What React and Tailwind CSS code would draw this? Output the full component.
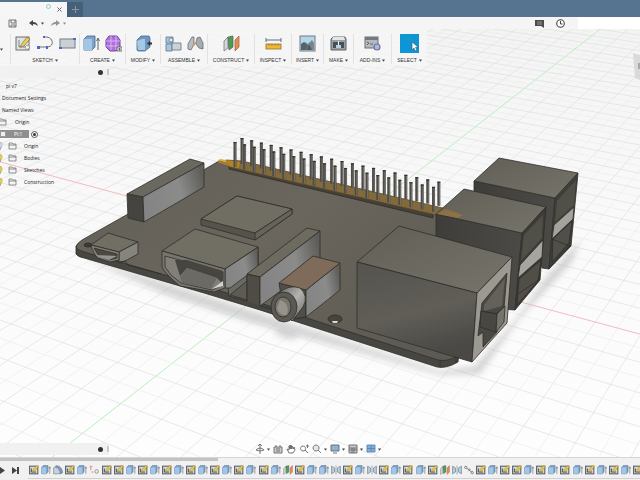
import React, { useState } from 'react';

const TIMELINE = 'SEFSEOSSESESESESESESECSEEJSEJSESESCJLSESSESESESESES'.split('');

// Ground grid, projected from the two vanishing points on the horizon
const gridLines = () => {
  const lines = [];
  for (let i = -60; i <= 60; i++) {
    const b = i * 0.0085;
    const at = (y) => {
      const s = (248 - y) / (y + 300);
      return (320 - 1717 * b + 1022 * (s - b)) / (1 + s);
    };
    lines.push({ key: `a${i}`, x1: at(20), y1: 20, x2: at(480), y2: 480, axis: i === 0 ? 'green' : null, major: i % 2 === 0 });
  }
  for (let i = -30; i <= 60; i++) {
    const c = i * 0.0158;
    const at = (x) => {
      const b = (320 - x + c * (1022 - x)) / (x + 1717);
      return (248 - 300 * (b + c)) / (1 + b + c);
    };
    lines.push({ key: `b${i}`, x1: -10, y1: at(-10), x2: 650, y2: at(650), axis: i === 0 ? 'red' : null, major: i % 2 === 0 });
  }
  return lines;
};

const lineColor = (line) => {
  if (line.axis === 'green') return '#b8efbc';
  if (line.axis === 'red') return '#f3bcc0';
  return line.major ? '#dedfe1' : '#ebeced';
};

const Pin = ({ x, y, h }) => (
  <g>
    <rect x={x - 1.5} y={y} width="3" height={h} fill="#4c4b47" />
    <rect x={x + 0.2} y={y + 1} width="0.9" height={h - 1} fill="#75736c" />
    <rect x={x - 1.5} y={y} width="3" height="1.2" fill="#333" />
  </g>
);

const Scene = () => {
  const pins = Array.from({ length: 20 }, (_, i) => i);
  return (
    <svg className="absolute inset-0 h-full w-full" viewBox="0 0 640 480" preserveAspectRatio="xMidYMid slice" role="img" aria-label="Board model">
      <defs>
        <linearGradient id="sky" x1="0" y1="0" x2="0" y2="1">
          <stop offset="0" stopColor="#f3f3f3" />
          <stop offset="0.5" stopColor="#fafafa" />
          <stop offset="1" stopColor="#fefefe" />
        </linearGradient>
        <linearGradient id="top" x1="0" y1="0" x2="1" y2="1">
          <stop offset="0" stopColor="#605e56" />
          <stop offset="1" stopColor="#77746a" />
        </linearGradient>
        <linearGradient id="board" x1="0" y1="0" x2="1" y2="0.6">
          <stop offset="0" stopColor="#625f57" />
          <stop offset="0.5" stopColor="#6a665d" />
          <stop offset="1" stopColor="#5d5a53" />
        </linearGradient>
        <linearGradient id="side" x1="0" y1="0.6" x2="1" y2="0.3">
          <stop offset="0" stopColor="#848485" />
          <stop offset="0.6" stopColor="#8b8b8a" />
          <stop offset="1" stopColor="#5f5e5b" />
        </linearGradient>
        <linearGradient id="front" x1="0" y1="0" x2="0.3" y2="1">
          <stop offset="0" stopColor="#55534e" />
          <stop offset="0.6" stopColor="#605e57" />
          <stop offset="1" stopColor="#4b4945" />
        </linearGradient>
        <linearGradient id="usb" x1="0" y1="0" x2="1" y2="0">
          <stop offset="0" stopColor="#3e3d3a" />
          <stop offset="1" stopColor="#4c4a46" />
        </linearGradient>
        <linearGradient id="barrel" x1="0" y1="0" x2="1" y2="1">
          <stop offset="0" stopColor="#5f5e5b" />
          <stop offset="0.5" stopColor="#b2b2b0" />
          <stop offset="1" stopColor="#656460" />
        </linearGradient>
        <filter id="soft" x="-20%" y="-20%" width="140%" height="140%">
          <feGaussianBlur stdDeviation="3" />
        </filter>
      </defs>

      <rect width="640" height="480" fill="url(#sky)" />
      {gridLines().map((line) => (
        <line key={line.key} x1={line.x1} y1={line.y1} x2={line.x2} y2={line.y2} stroke={lineColor(line)} strokeWidth={line.axis ? 1 : 0.7} />
      ))}

      {/* ground shadow */}
      <g filter="url(#soft)" fill="#b9b9b9" opacity="0.6">
        <path d="M82 257 L260 313 L440 371 L475 366 L515 320 L548 275 L580 240 L572 262 L520 318 L480 374 L440 375 L250 322 L165 294Z" />
        <path d="M280 326 L308 330 L292 340 L274 334Z" />
      </g>

      <g stroke="#2f2e2a" strokeWidth="0.8" strokeLinejoin="round">
        {/* far USB stack */}
        <path d="M474 181 L555 198 L549 269 L542 268 L530 205 L474 193Z" fill="url(#usb)" />
        <path d="M474 181 L499 158 L578 173 L555 198Z" fill="url(#top)" />
        <path d="M555 198 L578 173 L571 246 L549 269Z" fill="#3f3e39" />
        <path d="M557 201 L576 180 L574 205 L555 222Z" fill="#504f48" stroke="none" />
        <path d="M554 225 L574 207 L573 219 L552 239Z" fill="#a5a39d" />
        <path d="M553 239 L572 221 L569 243 L552 262Z" fill="#514f49" />
        <path d="M552 239 L570 246 L549 268" fill="none" />

        {/* board */}
        <path d="M76 246 L76 254 Q78 257 84 258 L204 293 L260 310 L350 339 L437 367 Q446 369 458 362 L460 345 L120 245Z" fill="#484640" />
        <path d="M76 247 Q76 244 82 240 L128 214 L219 161 L240 166 L440 214 L500 250 L480 350 L458 356 Q447 362 438 360 L350 332 L307 318 L260 303 L204 286 L84 252 Q77 250 76 247Z" fill="url(#board)" />
        <path d="M440 360 V367 M456 357 V363" fill="none" />
        <ellipse cx="88" cy="245" rx="4" ry="2" fill="#3b3a36" />

        {/* display connector */}
        <path d="M127 194 L190 159 L204 163 L143 197Z" fill="#6b695f" />
        <path d="M127 194 L143 197 L144 222 L128 218Z" fill="#454440" />
        <path d="M143 197 L204 163 V187 L144 222Z" fill="url(#side)" />

        {/* processor */}
        <path d="M201 219 L237 196 L292 209 V214 L255 240 L201 225Z" fill="#55534c" />
        <path d="M201 219 L237 196 L292 209 L255 233Z" fill="#706d62" />
        <path d="M255 233 L292 209 V214 L255 240Z" fill="#66635a" />

        {/* pin header */}
        <path d="M229 165 L433 213 V218 L229 169Z" fill="#45413a" />
        <path d="M226 160 L242 161 L447 209 L436 215 L229 167Z" fill="#826a3c" stroke="#584725" />
      </g>
      <path d="M217 162 L220 159 L240 162 L239 168 L229 166Z" fill="#c68f1d" opacity="0.7" />
      {pins.map((i) => (
        <g key={i}>
          <Pin x={242 + i * 9.6 + i * i * 0.04} y={138 + i * 2.3} h={26 - i * 0.1} />
          <Pin x={235 + i * 9.5 + i * i * 0.05} y={142 + i * 2.36} h={25} />
        </g>
      ))}

      <g stroke="#2f2e2a" strokeWidth="0.8" strokeLinejoin="round">
        {/* near USB stack */}
        <path d="M436 214 L522 233 L515 310 L500 309 L500 255 L436 242Z" fill="url(#usb)" />
        <path d="M436 214 L464 189 L546 207 L522 233Z" fill="url(#top)" />
        <path d="M522 233 L546 207 L540 280 L515 310Z" fill="#3c3b36" />
        <path d="M524 235 L543 215 L542 238 L521 261Z" fill="#504f48" stroke="none" />
        <path d="M520 265 L543 240 L542 257 L518 278Z" fill="#a7a59f" />
        <path d="M519 279 L541 260 L538 281 L517 305Z" fill="#504e47" />
        <path d="M518 294 L540 279" fill="none" />
        <path d="M436 214 L446 209 L463 215 L458 218Z" fill="#9b783b" stroke="none" opacity="0.7" />

        {/* ethernet */}
        <path d="M357 262 L399 226 L512 257 L477 293Z" fill="url(#top)" />
        <path d="M357 262 L477 293 L472 362 L357 328Z" fill="url(#front)" />
        <path d="M477 293 L512 257 L507 323 L472 362Z" fill="#9b9992" />
        <path d="M482 303 L507 273 L504 308 L497 313 V332 L483 347 V332 L478 336Z" fill="#4a4843" />
        <path d="M484 305 L505 278 L502 306 L484 311Z" fill="#64615a" stroke="none" />
        <path d="M481 311 L497 314 L504 307" fill="none" />
        <path d="M481 311 L497 314 L496 332 L480 327Z" fill="#494741" />
        <path d="M497 314 L505 306 L504 322 L496 332Z" fill="#77746b" />

        {/* micro USB */}
        <path d="M91 245 L108 233 L138 242 L119 252Z" fill="#716e63" />
        <path d="M119 252 L138 242 V254 L125 261 L119 262Z" fill="#85847f" />
        <path d="M91 245 L119 252 V260 L110 262 L98 258 Q93 254 91 245Z" fill="#827f77" />
        <path d="M94 248 L117 254 V258 L109 260 L99 256Z" fill="#4b4944" />
        <path d="M96 255 L117 256 L109 260 L99 257Z" fill="#969490" stroke="none" />
        <path d="M119 263 L125 261 L128 265 L161 274" fill="none" />

        {/* HDMI */}
        <path d="M225 269 L258 247 V268 L247 276 V301 L229 296 L228 287Z" fill="#6a6964" />
        <path d="M225 269 L258 247 V267 L230 288 L225 288Z" fill="url(#side)" />
        <path d="M230 295 L247 281 V300Z" fill="#5d5b53" />
        <path d="M162 251 L195 229 L258 247 L225 269Z" fill="#716e64" />
        <path d="M162 251 L225 269 V288 L214 292 L180 286 Q165 274 162 267Z" fill="#78756d" />
        <path d="M165 256 L223 272 V285 L212 290 L181 283 Q170 276 165 267Z" fill="#827f78" />
        <path d="M175 260 L187 260 L223 271 V284 L217 278 L187 268 L180 276Z" fill="#464540" stroke="none" />
        <path d="M180 277 L187 268 L217 278 L211 289 L182 283Z" fill="#6c6a64" stroke="none" />
        <path d="M212 289 L223 281 V286Z" fill="#d3d2cf" stroke="none" />

        {/* camera connector */}
        <path d="M247 274 L307 228 L320 231 L260 277Z" fill="#6d6a60" />
        <path d="M247 274 L260 277 V306 L247 301Z" fill="#4e4c45" stroke="none" />
        <path d="M247 301 V274 L260 277 V306" fill="none" />
        <path d="M260 277 L320 231 V262 L260 306Z" fill="url(#side)" />
        <path d="M260 306 L272 309" fill="none" />

        {/* audio jack */}
        <path d="M279 283 L306 290 V317 L285 320Z" fill="#504e47" />
        <path d="M306 290 L340 263 V290 L306 317Z" fill="url(#side)" />
        <path d="M279 283 L313 256 L340 263 L306 290Z" fill="#7f6b59" />
        <path d="M279 293 Q289 284 300 288 Q309 296 303 307 L292 321 L276 300Z" fill="url(#barrel)" />
        <ellipse cx="284" cy="307" rx="13" ry="15" fill="#5b5951" />
        <ellipse cx="283" cy="307" rx="8" ry="10" fill="#77756e" />
        <path d="M280 300 Q290 303 287 315 Q279 316 277 308Z" fill="#96938b" stroke="none" />
        <ellipse cx="335" cy="319" rx="7" ry="4" fill="#49433c" />
        <path d="M332 321 H338 L337 323 H333Z" fill="#d8d8d5" stroke="none" />
      </g>

      {/* view cube */}
      <path d="M633 53 L640 55 V80 L635 78Z" fill="#d9dadb" />
      <path d="M638 63 H640 V69 H638Z" fill="#a6a8aa" />
    </svg>
  );
};

const SketchIcon = () => (
  <g>
    <rect x="1" y="2" width="13" height="13" fill="#dfe2e4" stroke="#6a6f73" />
    <path d="M4 5 V12 H11" fill="none" stroke="#80868a" />
    <path d="M6 10 L12 2 L15 4 L9 11 L5 12Z" fill="#f0cd58" stroke="#7e6b36" strokeWidth="0.7" />
    <path d="M12 10 L15 12 L12 15 L10 12Z" fill="#f2f3f3" stroke="#777" strokeWidth="0.6" />
  </g>
);

const ExtrudeIcon = () => (
  <g>
    <path d="M1 4 L4 1 H12 V12 L9 15 H1Z" fill="#7ba3cb" stroke="#55708a" strokeWidth="0.9" />
    <path d="M1 4 H9 V15 H1Z" fill="#a3c6e6" />
    <path d="M15 15 V4 M13.5 6 L15 3 L16.5 6" fill="none" stroke="#555" strokeWidth="0.9" />
  </g>
);

const PlanesIcon = () => (
  <g>
    <path d="M1 6 L5 2 V13 L1 16Z" fill="#d3d6d8" stroke="#686d70" strokeWidth="0.7" />
    <path d="M5 2 L10 1 V12 L6 15Z" fill="#519957" stroke="#49684b" strokeWidth="0.7" />
    <path d="M12 5 L16 1 V12 L12 16Z" fill="#e88b55" stroke="#96613f" strokeWidth="0.7" />
  </g>
);

const JointIcon = () => (
  <g stroke="#656b70" strokeWidth="0.8">
    <path d="M1 14 V9 L5 2 H7 V9 L4 15Z" fill="#b8bfc4" />
    <path d="M10 3 L13 2 L16 8 V14 L12 13 L9 9Z" fill="#a6adb2" />
    <path d="M6 11 L10 6" stroke="#d29a58" strokeWidth="1.5" />
  </g>
);

const ICONS = {
  sketch: <SketchIcon />,
  line: (
    <g>
      <path d="M2 12 H9 M7 2 C17 1 18 12 10 12" fill="none" stroke="#6c7074" strokeWidth="1" />
      <path d="M0 11 H3 V14 H0Z M6 1 H8 V3 H6Z M9 11 H11 V14 H9Z" fill="#5564c8" />
    </g>
  ),
  rect: (
    <g>
      <rect x="1" y="4" width="15" height="9" fill="#cbd0d4" stroke="#777d82" />
      <path d="M0 12 H3 V14 H0Z M14 3 H17 V5 H14Z" fill="#5564c8" />
    </g>
  ),
  extrude: <ExtrudeIcon />,
  form: (
    <g>
      <path d="M4 1 H12 L15 5 V12 L11 16 H5 L1 12 V5Z" fill="#ad70dc" stroke="#7445a2" />
      <path d="M1 6 H15 M1 11 H14 M6 1 V15 M11 1 V15" stroke="#e2c6f5" strokeWidth="0.8" />
      <rect x="12" y="12" width="5" height="4" fill="#eee" stroke="#444" strokeWidth="0.7" />
      <path d="M13 14 H16 M14.5 13 V15.5" stroke="#333" strokeWidth="0.6" />
    </g>
  ),
  press: (
    <g>
      <path d="M2 5 L6 1 H14 L15 3 V12 L10 16 H3 L2 15Z" fill="#6e96bf" stroke="#4d6c88" strokeWidth="0.8" />
      <path d="M2 6 L7 4 H10 V15 H3Z" fill="#a4c8e8" />
      <path d="M12 8.5 L15 6 V7.500 H17 V9.500 H15 V11Z" fill="#333" />
    </g>
  ),
  component: (
    <g stroke="#5f7384" strokeWidth="0.8">
      <path d="M1 2 H8 V8 H1Z" fill="#a5c9e6" />
      <path d="M1 9 H7 V16 H1Z" fill="#a9c6e0" />
      <path d="M7 8 H16 V15 H7Z" fill="#cbd3da" />
      <circle cx="6" cy="5" r="2" fill="#e6f0f7" />
    </g>
  ),
  joint: <JointIcon />,
  planes: <PlanesIcon />,
  measure: (
    <g>
      <path d="M1 5 H16 M1 3 V7 M16 3 V7" stroke="#60717c" strokeWidth="1" />
      <rect x="1" y="9" width="15" height="5" fill="#efb83b" stroke="#917028" strokeWidth="0.8" />
      <path d="M4 9 V11 M7 9 V11 M10 9 V11 M13 9 V11" stroke="#8c6a25" strokeWidth="0.6" />
    </g>
  ),
  image: (
    <g>
      <rect x="1" y="1" width="15" height="15" fill="#b5d6e8" stroke="#757b80" />
      <path d="M2 10 L6 7 L9 9 L13 5 L15 8 V15 H2Z" fill="#76868f" />
      <path d="M8 15 L10 9 L13 15Z" fill="#4e5961" />
      <path d="M2 9 L5 7 L9 11 L7 15 H2Z" fill="#56636d" />
    </g>
  ),
  print: (
    <g>
      <path d="M1 4 L3 2 H15 L16 4 V15 H1Z" fill="#999fa3" stroke="#5f6468" />
      <path d="M3 2 H14 L15 5 H2Z" fill="#e3e5e6" />
      <rect x="3" y="7" width="11" height="6" fill="#474e54" />
      <path d="M6 10 H11 V13 H6Z" fill="#b3d1e3" />
      <path d="M8.5 6 V10" stroke="#fff" strokeWidth="1" />
    </g>
  ),
  addin: (
    <g>
      <rect x="1" y="2" width="13" height="11" fill="#b4b9bd" stroke="#6c7175" />
      <path d="M1 2 H14 V5 H1Z" fill="#747a80" />
      <path d="M3 7 L5 8 L3 10 M6 9 H9" stroke="#444" fill="none" strokeWidth="0.7" />
      <circle cx="13" cy="12" r="3" fill="#afb6dc" stroke="#6d75a4" strokeWidth="1.2" />
    </g>
  ),
  select: (
    <g>
      <path d="M3 4 H10 L12 7" fill="none" stroke="#39a877" strokeWidth="0.8" strokeDasharray="2 1" />
      <path d="M11 7 V15 L13 13 L14 16 L16 15 L14.500 12.500 L17 12Z" fill="#fff" stroke="#3c5260" strokeWidth="0.6" />
    </g>
  ),
};

const GROUPS = [
  { label: 'SKETCH', icons: ['sketch', 'line', 'rect'], width: 'w-[69px]' },
  { label: 'CREATE', icons: ['extrude', 'form'], width: 'w-[46px]' },
  { label: 'MODIFY', icons: ['press'], width: 'w-[35px]' },
  { label: 'ASSEMBLE', icons: ['component', 'joint'], width: 'w-[47px]' },
  { label: 'CONSTRUCT', icons: ['planes'], width: 'w-[47px]' },
  { label: 'INSPECT', icons: ['measure'], width: 'w-[37px]' },
  { label: 'INSERT', icons: ['image'], width: 'w-[32px]' },
  { label: 'MAKE', icons: ['print'], width: 'w-[30px]' },
  { label: 'ADD-INS', icons: ['addin'], width: 'w-[38px]' },
  { label: 'SELECT', icons: ['select'], width: 'w-[36px]' },
];

const Caret = () => (
  <svg className="h-[3px] w-[3px] shrink-0" viewBox="0 0 4 3" aria-hidden="true">
    <path d="M0 0 H4 L2 3Z" fill="#444" />
  </svg>
);

const ToolGroup = ({ group }) => (
  <div className={`flex h-[30px] flex-col items-center justify-between border-l border-[#e2e2e2] ${group.width}`}>
    <div className="flex gap-1">
      {group.icons.map((name) => (
        <button
          key={name}
          type="button"
          aria-label={name}
          className={`flex h-[19px] items-center justify-center ${name === 'select' ? 'w-[19px] bg-[#0e95d6]' : 'w-[18px]'}`}
        >
          <svg className="h-[17px] w-[17px]" viewBox="0 0 17 17">{ICONS[name]}</svg>
        </button>
      ))}
    </div>
    <button type="button" className="flex items-center gap-[2px] text-[5px] leading-[8px] text-[#333]">
      {group.label}
      <Caret />
    </button>
  </div>
);

const Folder = () => (
  <svg className="h-2 w-[9px] shrink-0" viewBox="0 0 9 8" aria-hidden="true">
    <path d="M1 7 V1 H4 L5 2 H8 V7Z M1 3 H8" fill="#f4f4f4" stroke="#777" strokeWidth="0.8" />
  </svg>
);

const Bulb = ({ on }) => (
  <svg className="h-2 w-[3px] shrink-0" viewBox="0 0 3 8" aria-hidden="true">
    <path d="M0 0 Q3 1 2 4 L1 6 H0Z" fill={on ? '#ece254' : '#eef0f5'} stroke={on ? '#a8a150' : '#8c92a0'} strokeWidth="0.6" />
    <path d="M0 7 H1" stroke="#777" />
  </svg>
);

const PanelBar = () => (
  <div className="flex h-3 w-[109px] items-center justify-end gap-1 bg-[#f1f1f1]">
    <button type="button" aria-label="Panel options" className="flex h-[5px] w-[5px] items-center justify-center rounded-full bg-[#333]" />
    <span className="h-[6px] w-[2px] bg-[#c9c9c9]" />
  </div>
);

const Browser = () => {
  const [active, setActive] = useState(true);
  return (
    <ul className="mt-[2px] w-fit font-['Open_Sans','Noto_Sans',sans-serif] text-[5px] leading-[12px] text-[#222]">
      <li className="h-3 pl-[6px]">pi v7</li>
      <li className="h-3 pl-[2px]">Document Settings</li>
      <li className="h-3 pl-[2px]">Named Views</li>
      <li className="flex h-3 items-center gap-[8px] overflow-hidden">
        <span className="-ml-[2px] flex"><Folder /></span>Origin
      </li>
      <li className="flex h-3 items-center gap-[2px]">
        <span className="flex h-2 w-[29px] items-center gap-2 bg-[#8f8f8f] text-white">
          <span className="h-[6px] w-[6px] rounded-[1px] border border-[#999] bg-[#eee]" />
          Pi:1
        </span>
        <label className="flex items-center">
          <input type="radio" checked={active} onChange={() => setActive(true)} aria-label="Activate component" className="flex h-[7px] w-[7px] appearance-none items-center justify-center rounded-full border border-[#555] bg-white before:h-[3px] before:w-[3px] before:rounded-full before:bg-[#333]" />
        </label>
      </li>
      {['Origin', 'Bodies', 'Sketches', 'Construction'].map((name) => (
        <li key={name} className="flex h-3 items-center">
          <Bulb on={name !== 'Origin'} />
          <span className="ml-[5px] mr-[7px] flex"><Folder /></span>
          {name}
        </li>
      ))}
    </ul>
  );
};

const NAV = [
  { name: 'Orbit', caret: true, art: <path d="M5 0 V10 M1 6 Q5 2 9 6 M1 6 Q5 8 9 6 M3 2 L5 0 L7 2" /> },
  { name: 'Look at', art: <path d="M1 3 H9 V9 H1Z M3 1 V3 M7 1 V3 M3 5 H7 M3 7 H7" fill="#cfcfcf" /> },
  { name: 'Pan', art: <path d="M3 9 L1 5 L3 6 V2 L4 5 V1 L5 5 V1 L6 5 V2 L8 5 V3 L9 6 L7 9Z" /> },
  { name: 'Zoom', art: <path d="M4 2 A2.500 2.500 0 1 0 4.100 2 M6 6 L9 9 M7 2 H10 M8.500 0.500 V4" /> },
  { name: 'Fit', caret: true, art: <path d="M4 1 A3 3 0 1 0 4.100 1 M6 6 L9 9" fill="#dcebf0" /> },
  { name: 'Display', caret: true, art: <path d="M1 1 H9 V7 H1Z M3 9 H7" fill="#8db4d6" /> },
  { name: 'Grid', caret: true, art: <path d="M1 1 H9 V9 H1Z M1 4 H9 M1 6 H9 M4 4 V9 M6 4 V9" fill="#c7cbce" /> },
  { name: 'Viewports', caret: true, art: <path d="M1 1 H9 V8 H1Z M5 1 V8 M1 4.500 H9" fill="#7fb0df" stroke="#5f86ab" /> },
];

const Feature = ({ type }) => {
  if (type === 'S') return <g><rect x="1" y="2" width="14" height="13" fill="#d3d9dc" stroke="#555c61" strokeWidth="1.8" /><path d="M4 6 V12 H12" stroke="#444" strokeWidth="1.6" fill="none" /><path d="M6 9 L13 1 L16 3 L9 11Z" fill="#f1cc36" stroke="#84702c" strokeWidth="0.7" /></g>;
  if (type === 'E') return <ExtrudeIcon />;
  if (type === 'C') return <PlanesIcon />;
  if (type === 'J') return <g stroke="#587187" fill="#b6d0e1"><path d="M1 2 L6 5 V12 L1 15Z M16 2 L11 5 V12 L16 15Z" /><path d="M8.500 1 V16" stroke="#777" /></g>;
  if (type === 'F') return <g stroke="#64788b"><path d="M1 5 L5 1 Q15 2 16 13 L12 15 H1Z" fill="#c9d0d8" /><path d="M4 4 Q12 5 12 15 L16 13 Q15 3 7 2Z" fill="#789fca" /></g>;
  if (type === 'O') return <g><path d="M3 1 V9 M1 3 H6" stroke="#e09a9a" strokeWidth="2" /><circle cx="6" cy="12" r="2" fill="#f0b7b7" /><circle cx="13" cy="11" r="3" fill="#eee" stroke="#777" strokeWidth="1.2" /></g>;
  return <g fill="#eee" stroke="#444"><path d="M3 4 L14 13" /><circle cx="3" cy="4" r="2" /><circle cx="9" cy="8" r="1.500" /><circle cx="14" cy="13" r="2" /></g>;
};

const App = () => {
  return (
    <div className="relative flex h-screen flex-col overflow-hidden bg-[#f7f7f7] font-['Liberation_Sans',Arial,sans-serif]">
      <Scene />

      <header className="relative">
        <div className="flex h-[17px] items-end bg-[#56738f]">
          <div className="flex h-[15px] w-[67px] items-center justify-end gap-1 bg-[#f6f6f6] pr-1">
            <span className="mb-[6px] h-[5px] w-[5px] rounded-full border border-[#91cbd6]" />
            <button type="button" aria-label="Close document" className="flex h-2 w-2 items-center justify-center">
              <svg className="h-[5px] w-[5px]" viewBox="0 0 5 5"><path d="M0.500 0.500 L4.500 4.500 M4.500 0.500 L0.500 4.500" stroke="#666" /></svg>
            </button>
          </div>
          <button type="button" aria-label="New document" className="flex h-[15px] w-4 items-center justify-center bg-[#466078]">
            <svg className="h-[7px] w-[7px]" viewBox="0 0 7 7"><path d="M3.500 0 V7 M0 3.500 H7" stroke="#8298ab" /></svg>
          </button>
        </div>
        <div className="flex h-3 items-center bg-[#f5f5f5]">
          <button type="button" aria-label="Save" className="ml-2">
            <svg className="h-[9px] w-[9px]" viewBox="0 0 9 9"><path d="M1 1 H8 V8 H1Z M3 1 V4 H7 V1 M3 8 V6 H7 V8" fill="none" stroke="#777" /></svg>
          </button>
          <button type="button" aria-label="Undo" className="ml-3 flex items-center gap-[3px]">
            <svg className="h-[7px] w-[9px]" viewBox="0 0 9 7"><path d="M0 3 L4 0 V2 Q8 2 9 6 Q7 4 4 4 V6Z" fill="#444" /></svg>
            <Caret />
          </button>
          <button type="button" aria-label="Redo" className="ml-[7px] flex items-center gap-[3px] opacity-60">
            <svg className="h-[7px] w-[9px]" viewBox="0 0 9 7"><path d="M9 3 L5 0 V2 Q1 2 0 6 Q2 4 5 4 V6Z" fill="#555" /></svg>
            <Caret />
          </button>
          <div className="ml-auto flex gap-3">
            <button type="button" aria-label="Comments">
              <svg className="h-[9px] w-[9px]" viewBox="0 0 9 9"><path d="M0 1 H9 V9 L6 7 H0Z" fill="#4b4b4b" /><path d="M2 3 H7 M2 5 H7" stroke="#aaa" strokeWidth="0.8" /></svg>
            </button>
            <button type="button" aria-label="Job status">
              <svg className="h-[9px] w-[9px]" viewBox="0 0 9 9"><circle cx="4.500" cy="4.500" r="3.800" fill="#fff" stroke="#444" strokeWidth="1.100" /><path d="M4.500 2 V5 H6.500" fill="none" stroke="#444" /></svg>
            </button>
          </div>
          <div className="ml-[13px] h-full w-[62px] bg-white" />
        </div>
      </header>

      <nav aria-label="Tools" className="relative flex h-[37px] w-fit items-end bg-[#f6f6f6]/85 pb-[2px]">
        <div className="flex h-[30px] w-[10px] items-center"><Caret /></div>
        {GROUPS.map((group) => <ToolGroup key={group.label} group={group} />)}
      </nav>

      <aside className="relative flex-1">
        <PanelBar />
        <Browser />
      </aside>

      <div className="relative mb-[2px] grid grid-cols-[109px_1fr_114px] items-center">
        <PanelBar />
        <div className="flex items-center justify-center gap-[3px]">
          {NAV.map((item) => (
            <button key={item.name} type="button" aria-label={item.name} className="flex items-center gap-[2px]">
              <svg className="h-[10px] w-[10px]" viewBox="0 0 10 10" fill="none" stroke="#666" strokeWidth="0.9">{item.art}</svg>
              {item.caret && <Caret />}
            </button>
          ))}
        </div>
      </div>

      <footer className="relative h-[23px] shrink-0 border-t border-[#d5d5d5] bg-[#f1f1f1]">
        <div className="h-[3px] w-[34%] bg-[#c3c3c3]" />
        <div className="flex h-[18px] items-center">
          <button type="button" aria-label="Play" className="w-[5px]">
            <svg className="h-[7px] w-[5px]" viewBox="0 0 5 7"><path d="M0 0 L5 3.500 L0 7Z" fill="#444" /></svg>
          </button>
          <button type="button" aria-label="Go to end" className="ml-[7px] mr-[9px] w-[7px]">
            <svg className="h-[7px] w-[7px]" viewBox="0 0 7 7"><path d="M0 0 L5 3.500 L0 7Z M5 0 H7 V7 H5Z" fill="#444" /></svg>
          </button>
          <div className="-mr-1 grid flex-1 auto-cols-fr grid-flow-col border-b border-[#d0d0d0]">
            {TIMELINE.map((type, i) => (
              <button key={i} type="button" aria-label={`Feature ${i + 1}`} className="flex h-4 items-center justify-center">
                <svg className="h-[10px] w-[10px]" viewBox="0 0 17 17"><Feature type={type} /></svg>
              </button>
            ))}
          </div>
        </div>
      </footer>
    </div>
  );
};

export default App;
